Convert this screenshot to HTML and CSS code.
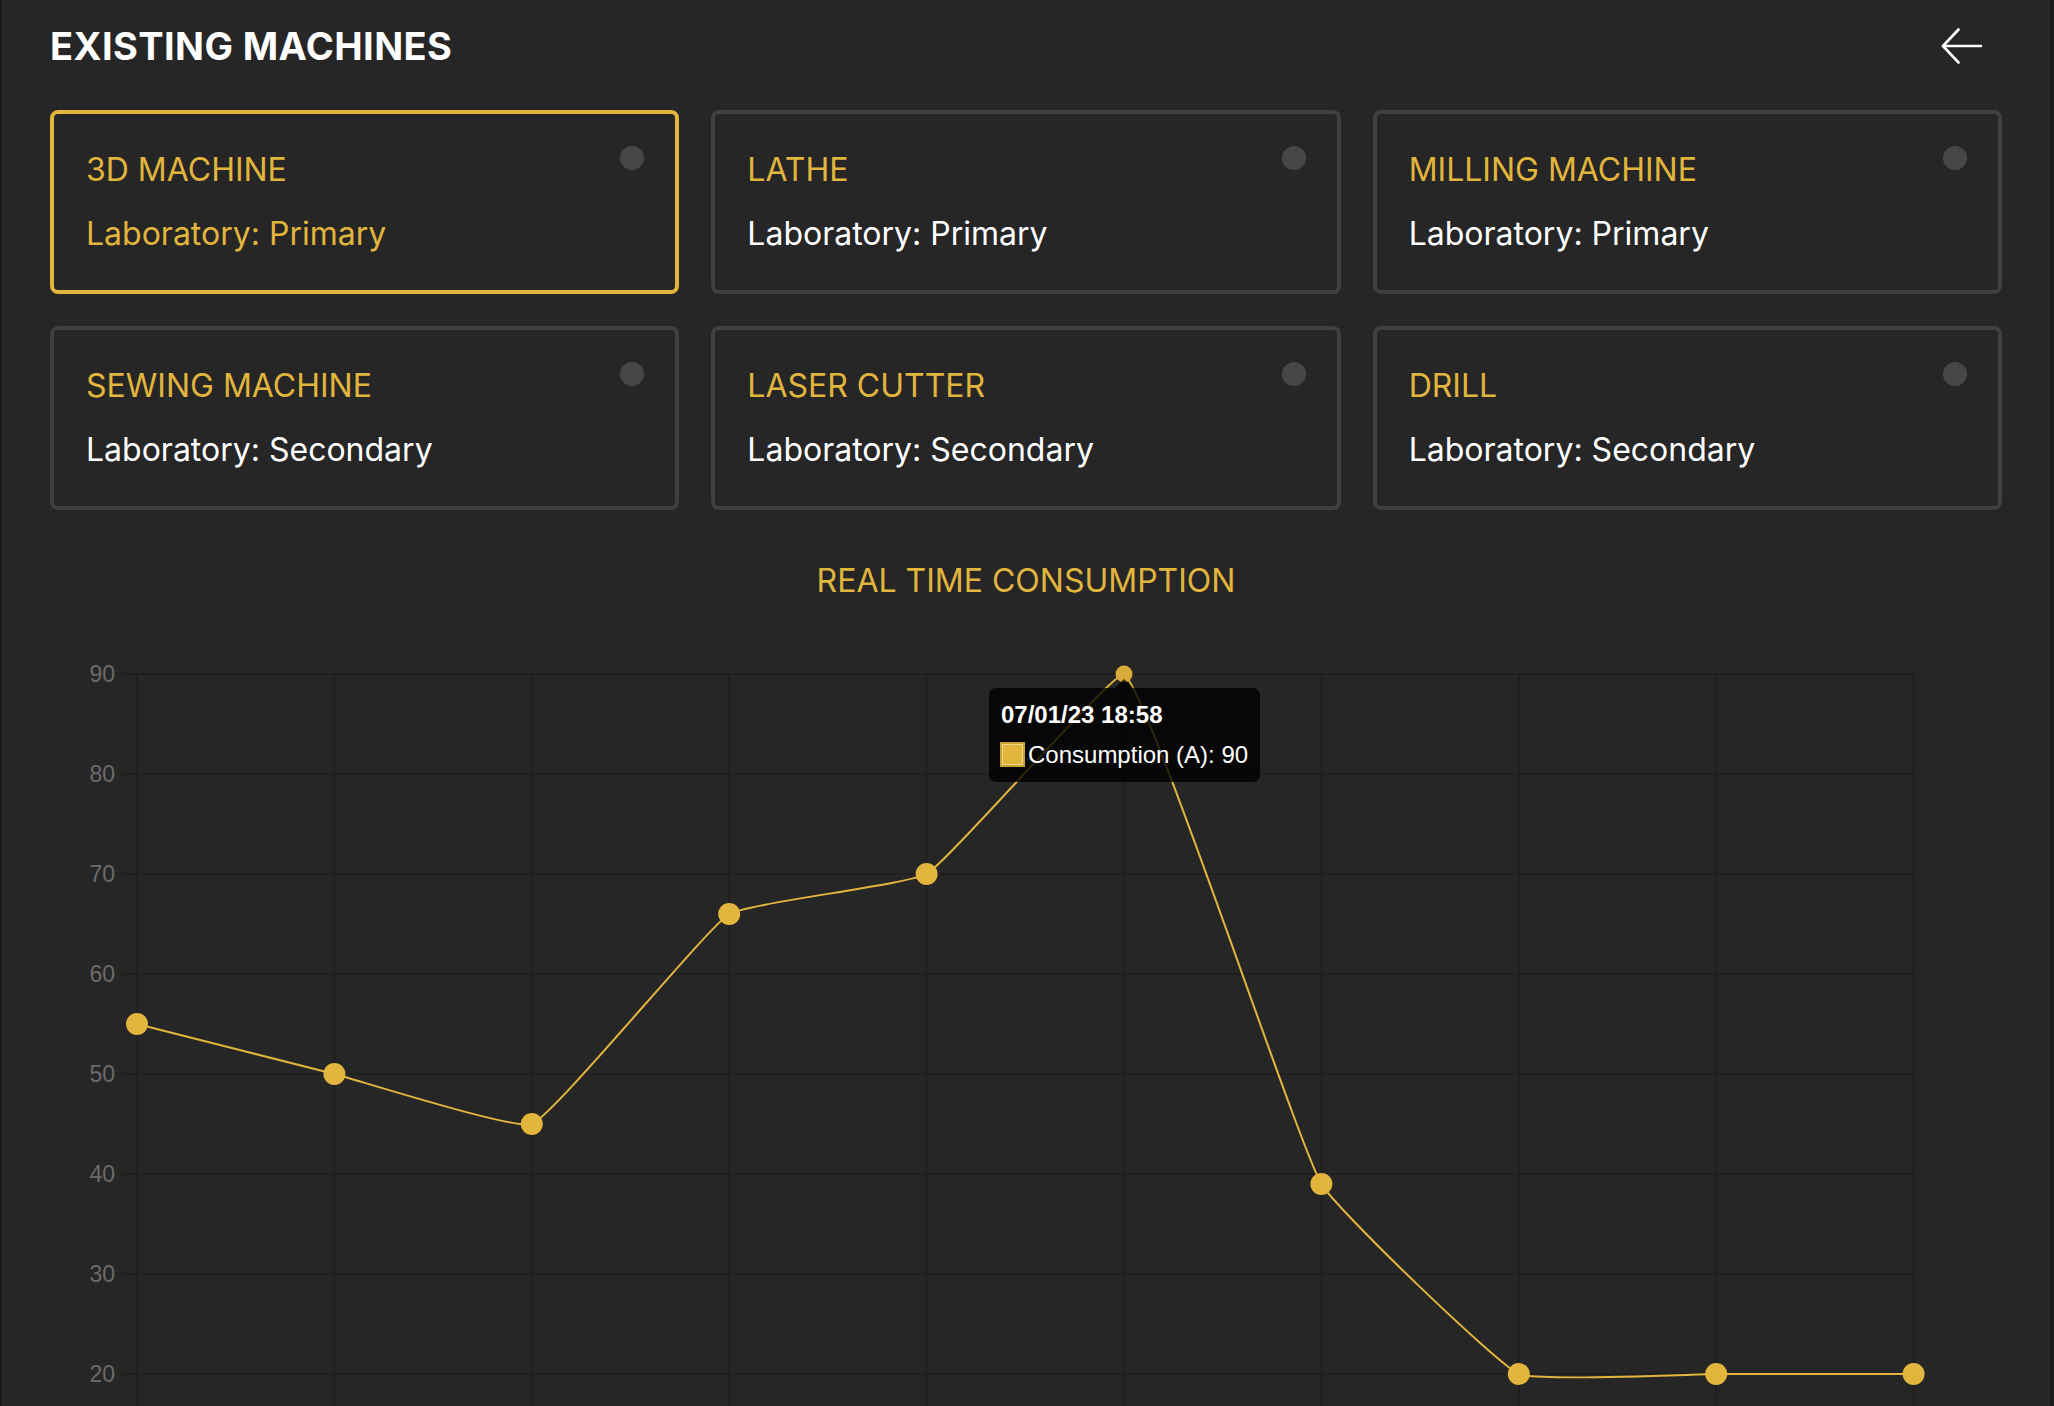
FILE: index.html
```html
<!DOCTYPE html>
<html lang="en">
<head>
<meta charset="utf-8">
<title>Existing Machines</title>
<link rel="stylesheet" href="styles.css">
</head>
<body>
<div class="app">
  <header class="header">
    <h1 class="page-title">EXISTING MACHINES</h1>
    <button class="back-btn" aria-label="Back">
      <svg width="42" height="36" viewBox="0 0 42 36" fill="none" stroke="#ffffff" stroke-width="2.6" stroke-linecap="round" stroke-linejoin="round">
        <path d="M40 18H2"/>
        <path d="M17.5 1.5L2 18l15.5 16.5"/>
      </svg>
    </button>
  </header>

  <section class="machines">
    <div class="card card--active">
      <span class="dot"></span>
      <div class="card-title">3D MACHINE</div>
      <div class="card-sub">Laboratory: Primary</div>
    </div>
    <div class="card">
      <span class="dot"></span>
      <div class="card-title">LATHE</div>
      <div class="card-sub">Laboratory: Primary</div>
    </div>
    <div class="card">
      <span class="dot"></span>
      <div class="card-title">MILLING MACHINE</div>
      <div class="card-sub">Laboratory: Primary</div>
    </div>
    <div class="card">
      <span class="dot"></span>
      <div class="card-title">SEWING MACHINE</div>
      <div class="card-sub">Laboratory: Secondary</div>
    </div>
    <div class="card">
      <span class="dot"></span>
      <div class="card-title">LASER CUTTER</div>
      <div class="card-sub">Laboratory: Secondary</div>
    </div>
    <div class="card">
      <span class="dot"></span>
      <div class="card-title">DRILL</div>
      <div class="card-sub">Laboratory: Secondary</div>
    </div>
  </section>

  <h2 class="chart-title">REAL TIME CONSUMPTION</h2>

  <div class="chart">
    <svg class="chart-svg" width="1952" height="786" viewBox="50 620 1952 786">
      <g class="grid">
        <line x1="122" y1="674" x2="1914.6" y2="674"/>
        <line x1="122" y1="774" x2="1914.6" y2="774"/>
        <line x1="122" y1="874" x2="1914.6" y2="874"/>
        <line x1="122" y1="974" x2="1914.6" y2="974"/>
        <line x1="122" y1="1074" x2="1914.6" y2="1074"/>
        <line x1="122" y1="1174" x2="1914.6" y2="1174"/>
        <line x1="122" y1="1274" x2="1914.6" y2="1274"/>
        <line x1="122" y1="1374" x2="1914.6" y2="1374"/>
        <line x1="137" y1="674" x2="137" y2="1420"/>
        <line x1="334.4" y1="674" x2="334.4" y2="1420"/>
        <line x1="531.8" y1="674" x2="531.8" y2="1420"/>
        <line x1="729.2" y1="674" x2="729.2" y2="1420"/>
        <line x1="926.6" y1="674" x2="926.6" y2="1420"/>
        <line x1="1124" y1="674" x2="1124" y2="1420"/>
        <line x1="1321.4" y1="674" x2="1321.4" y2="1420"/>
        <line x1="1518.8" y1="674" x2="1518.8" y2="1420"/>
        <line x1="1716.2" y1="674" x2="1716.2" y2="1420"/>
        <line x1="1913.6" y1="674" x2="1913.6" y2="1420"/>
      </g>
      <g class="ticks">
        <text x="115" y="682.3">90</text>
        <text x="115" y="782.3">80</text>
        <text x="115" y="882.3">70</text>
        <text x="115" y="982.3">60</text>
        <text x="115" y="1082.3">50</text>
        <text x="115" y="1182.3">40</text>
        <text x="115" y="1282.3">30</text>
        <text x="115" y="1382.3">20</text>
      </g>
      <path class="series" d="M137,1024 C156.7,1029 314.7,1069 334.4,1074 C354.1,1079 515.5,1130.6 531.8,1124 C554.9,1114.6 705.9,928.7 729.2,914 C745.4,903.7 910.1,884 926.6,874 C949.6,860 1110.6,674 1124,674 C1150.1,694.5 1295.1,1137.4 1321.4,1184 C1334.6,1207.4 1495.9,1363 1518.8,1374 C1535.3,1382 1696.5,1374 1716.2,1374 C1735.9,1374 1893.9,1374 1913.6,1374"/>
      <g class="points">
        <circle cx="137" cy="1024" r="11"/>
        <circle cx="334.4" cy="1074" r="11"/>
        <circle cx="531.8" cy="1124" r="11"/>
        <circle cx="729.2" cy="914" r="11"/>
        <circle cx="926.6" cy="874" r="11"/>
        <circle class="point-hover" cx="1124" cy="674" r="8.5"/>
        <circle cx="1321.4" cy="1184" r="11"/>
        <circle cx="1518.8" cy="1374" r="11"/>
        <circle cx="1716.2" cy="1374" r="11"/>
        <circle cx="1913.6" cy="1374" r="11"/>
      </g>
    </svg>

    <div class="tooltip">
      <div class="tooltip-title">07/01/23 18:58</div>
      <div class="tooltip-body"><span class="swatch"></span><span>Consumption (A): 90</span></div>
    </div>
  </div>
</div>
</body>
</html>
```

FILE: styles.css
```css
* {
  box-sizing: border-box;
}

html,
body {
  margin: 0;
  padding: 0;
  background: #1b1b1b;
  overflow: hidden;
}

.app {
  margin: 0 4px 0 2px;
  height: 1406px;
  padding: 0 48px;
  background: #262626;
  font-family: "Inter", "Noto Sans", sans-serif;
  color: #ffffff;
  overflow: hidden;
}

.header {
  display: flex;
  align-items: center;
  justify-content: space-between;
  padding-top: 27px;
  height: 65px;
}

.page-title {
  margin: 0;
  font-size: 38px;
  line-height: 38px;
  font-weight: 700;
  letter-spacing: 0.4px;
  color: #ffffff;
}

.back-btn {
  display: flex;
  align-items: center;
  justify-content: center;
  margin-right: 19px;
  padding: 0;
  border: 0;
  background: transparent;
}

.machines {
  margin-top: 45px;
  display: grid;
  grid-template-columns: repeat(3, 1fr);
  gap: 32px;
}

.card {
  position: relative;
  border: 4px solid #404040;
  border-radius: 8px;
  padding: 40px 32px;
  display: flex;
  flex-direction: column;
  gap: 32px;
  font-size: 32px;
  line-height: 32px;
}

.card--active {
  border-color: #e2b53c;
}

.card-title {
  color: #e2b53c;
}

.card-sub {
  color: #ffffff;
}

.card--active .card-sub {
  color: #e2b53c;
}

.dot {
  position: absolute;
  top: 32px;
  right: 31px;
  width: 24px;
  height: 24px;
  border-radius: 50%;
  background: #474747;
}

.chart-title {
  margin: 55px 0 0;
  text-align: center;
  font-size: 32px;
  line-height: 32px;
  font-weight: 400;
  color: #e2b53c;
}

.chart {
  position: relative;
  margin-top: 23px;
  height: 786px;
}

.chart-svg {
  display: block;
}

.grid line {
  stroke: #1f1f1f;
  stroke-width: 2;
}

.ticks text {
  font-family: "Liberation Sans", Arial, sans-serif;
  font-size: 23px;
  fill: #6a6a6a;
  text-anchor: end;
}

.series {
  fill: none;
  stroke: #e2b53c;
  stroke-width: 2;
}

.points circle {
  fill: #e2b53c;
}

.points .point-hover {
  fill: #d8ac3b;
}

.tooltip {
  position: absolute;
  left: 939px;
  top: 68px;
  padding: 15px 12px 15px 11px;
  background: rgba(0, 0, 0, 0.8);
  border-radius: 7px;
  font-family: "Liberation Sans", Arial, sans-serif;
  font-size: 24px;
  line-height: 24px;
  color: #ffffff;
  display: flex;
  flex-direction: column;
  gap: 15px;
}

.tooltip::before {
  content: "";
  position: absolute;
  top: -9px;
  left: 126px;
  border-left: 9px solid transparent;
  border-right: 9px solid transparent;
  border-bottom: 9px solid rgba(0, 0, 0, 0.8);
}

.tooltip-title {
  font-weight: 700;
  padding-left: 1px;
}

.tooltip-body {
  display: flex;
  align-items: center;
  gap: 3px;
}

.swatch {
  width: 25px;
  height: 25px;
  background: #e2b53c;
  border: 2px solid #c9a036;
  box-shadow: inset 0 0 0 1px #f2d98a;
}
```
